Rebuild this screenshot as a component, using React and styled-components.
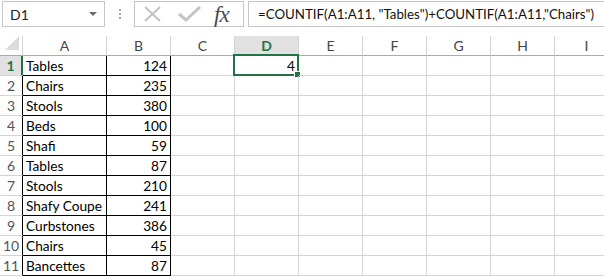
import React from 'react';
import styled, { createGlobalStyle, css } from 'styled-components';

const GlobalStyle = createGlobalStyle`
    html, body {
        margin: 0;
        padding: 0;
        background: #fff;
        overflow: hidden;
    }
    body {
        font-family: Lato, "Open Sans", sans-serif;
    }
`

const Window = styled.div`
    width: 604px;
    height: 277px;
    display: flex;
    flex-direction: column;
    overflow: hidden;
    background: #fff;
`

const FormulaBar = styled.div`
    display: flex;
    align-items: flex-start;
    height: 27px;
    padding-top: 1px;
    margin-bottom: 8px;
    > * {
        flex-shrink: 0;
    }
`

const NameBox = styled.div`
    box-sizing: border-box;
    margin-left: 2px;
    width: 103px;
    height: 26px;
    border: 1px solid #c6c6c6;
    display: flex;
    align-items: center;
    justify-content: space-between;
    padding: 0 7px 0 7px;
    font-size: 14px;
    color: #222;
`

const DropArrow = styled.span`
    width: 0;
    height: 0;
    border-left: 4px solid transparent;
    border-right: 4px solid transparent;
    border-top: 4px solid #6d6d6d;
`

const Grip = styled.div`
    width: 29px;
    height: 26px;
    display: flex;
    flex-direction: column;
    align-items: center;
    justify-content: center;
    gap: 2px;
    span {
        width: 2px;
        height: 2px;
        background: #a6a6a6;
    }
`

const FxButtons = styled.div`
    box-sizing: border-box;
    width: 110px;
    height: 26px;
    border: 1px solid #c6c6c6;
    display: flex;
    align-items: center;
    padding-left: 8px;
`

const FxLabel = styled.span`
    font-family: "Liberation Serif", serif;
    font-style: italic;
    font-size: 23px;
    color: #4a4a4a;
    margin-left: 11px;
    line-height: 1;
    letter-spacing: -1px;
`

const FormulaInput = styled.div`
    box-sizing: border-box;
    flex: 1 1 auto !important;
    min-width: 0;
    overflow: hidden;
    margin-left: 4px;
    height: 26px;
    border: 1px solid #c6c6c6;
    border-right: none;
    display: flex;
    align-items: center;
    padding-left: 9px;
    font-size: 13.3px;
    color: #111;
    white-space: nowrap;
`

const Sheet = styled.div`
    display: grid;
    grid-template-columns: 23px 84px 64px 64px 64px 64px 64px 64px 64px 64px;
    grid-auto-rows: 20px;
`

const Cell = styled.div`
    box-sizing: border-box;
    position: relative;
    border-right: 1px solid #d4d4d4;
    border-bottom: 1px solid #d4d4d4;
    font-size: 13.7px;
    color: #000;
    line-height: 19px;
    padding: 0 3px;
    white-space: nowrap;
    text-align: ${p => (p.$num ? 'right' : 'left')};
    ${p => p.$table && css`
        border-right-color: #000;
        border-bottom-color: #000;
    `}
`

const Corner = styled.div`
    box-sizing: border-box;
    position: relative;
    border-right: 1px solid #d4d4d4;
    border-bottom: 1px solid #ababab;
    &::after {
        content: '';
        position: absolute;
        right: 3px;
        bottom: 5px;
        width: 0;
        height: 0;
        border-left: 14px solid transparent;
        border-bottom: 14px solid #dcdcdc;
    }
`

const ColHead = styled.div`
    box-sizing: border-box;
    border-right: 1px solid #d4d4d4;
    border-bottom: 1px solid #ababab;
    text-align: center;
    font-size: 14px;
    line-height: 19px;
    color: #444;
    ${p => p.$active && css`
        background: #e1e1e1;
        color: #217346;
        font-weight: 700;
        border-bottom: 2px solid #217346;
    `}
`

const RowHead = styled.div`
    box-sizing: border-box;
    border-right: 1px solid #000;
    border-bottom: 1px solid #d4d4d4;
    text-align: center;
    font-size: 14px;
    line-height: 19px;
    color: #555;
    ${p => p.$active && css`
        background: #e1e1e1;
        color: #217346;
        font-weight: 700;
        border-right: 2px solid #217346;
    `}
`

const Selection = styled.div`
    position: absolute;
    left: -2px;
    top: -2px;
    right: -1px;
    bottom: -1px;
    border: 2px solid #217346;
    pointer-events: none;
    &::after {
        content: '';
        position: absolute;
        right: -4px;
        bottom: -4px;
        width: 5px;
        height: 5px;
        background: #217346;
        border: 1px solid #fff;
    }
`

const columns = ['A', 'B', 'C', 'D', 'E', 'F', 'G', 'H', 'I']

const rows = [
    ['Tables', 124],
    ['Chairs', 235],
    ['Stools', 380],
    ['Beds', 100],
    ['Shafi', 59],
    ['Tables', 87],
    ['Stools', 210],
    ['Shafy Coupe', 241],
    ['Curbstones', 386],
    ['Chairs', 45],
    ['Bancettes', 87],
]

const IconCross = () => (
    <svg width="20" height="16" viewBox="0 0 20 16">
        <path d="M2 1 L17 15 M17 1 L2 15" stroke="#c4c4c4" strokeWidth="2.2" fill="none" />
    </svg>
)

const IconCheck = () => (
    <svg width="26" height="16" viewBox="0 0 26 16" style={{ marginLeft: 14 }}>
        <path d="M2 8 L9 14 L23 1" stroke="#c4c4c4" strokeWidth="3" fill="none" />
    </svg>
)

const App = () => (
    <Window>
        <GlobalStyle />
        <FormulaBar>
            <NameBox>
                D1
                <DropArrow />
            </NameBox>
            <Grip>
                <span />
                <span />
                <span />
            </Grip>
            <FxButtons>
                <IconCross />
                <IconCheck />
                <FxLabel>fx</FxLabel>
            </FxButtons>
            <FormulaInput>=COUNTIF(A1:A11, "Tables")+COUNTIF(A1:A11,"Chairs")</FormulaInput>
        </FormulaBar>
        <Sheet>
            <Corner />
            {columns.map(c => (
                <ColHead key={c} $active={c === 'D'}>{c}</ColHead>
            ))}
            {rows.map(([name, qty], i) => (
                <React.Fragment key={i}>
                    <RowHead $active={i === 0}>{i + 1}</RowHead>
                    <Cell $table>{name}</Cell>
                    <Cell $table $num>{qty}</Cell>
                    <Cell />
                    <Cell $num>
                        {i === 0 && '4'}
                        {i === 0 && <Selection />}
                    </Cell>
                    <Cell />
                    <Cell />
                    <Cell />
                    <Cell />
                    <Cell />
                </React.Fragment>
            ))}
        </Sheet>
    </Window>
)

export default App;
